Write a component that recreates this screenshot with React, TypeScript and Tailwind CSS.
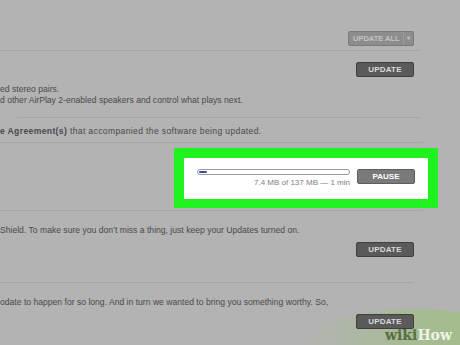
import React from 'react'

const font = { fontFamily: '"Liberation Sans", Arial, sans-serif' }

function UpdateButton({ className = '' }: { className?: string }) {
  return (
    <div
      className={`relative z-10 flex h-[15px] w-[58px] items-center justify-center rounded-[2px] border border-[#3f3f3f] bg-[#5a5a5a] text-[8px] font-bold tracking-[0.2px] text-[#dcdcdc] ${className}`}>
      UPDATE
    </div>
  )
}

export default function App() {
  return (
    <div
      className="relative h-[345px] w-[460px] overflow-hidden bg-[#b3b3b3] text-[8.6px] text-[#4a4a4a]"
      style={font}>
      {/* header row */}
      <div className="flex h-[51px] w-[421px] items-start justify-end border-b border-[#a6a6a6] pt-[31px] pr-[7px]">
        <div className="flex h-[15px] w-[66px] items-center whitespace-nowrap rounded-[2px] border border-[#7a7a7a] bg-[#8d8d8d] text-[7.5px] font-bold text-[#c4c4c4]">
          <span className="flex-1 pl-[4px]">UPDATE ALL</span>
          <span className="flex h-full w-[10px] items-center justify-center border-l border-[#9a9a9a] text-[6px]">
            ▾
          </span>
        </div>
      </div>

      {/* row 1 */}
      <div className="relative h-[67px]">
        <div className="flex justify-end pt-[11px] pr-[46px]">
          <UpdateButton />
        </div>
        <div className="mt-[7px] leading-[11px]">
          <div>ed stereo pairs.</div>
          <div>d other AirPlay 2-enabled speakers and control what plays next.</div>
        </div>
        <div className="absolute bottom-0 left-[17px] h-px w-[403px] bg-[#a6a6a6]" />
      </div>

      {/* row 2 */}
      <div className="h-[25px] w-[423px] border-b border-[#a6a6a6] pt-[8px] leading-[11px] tracking-[0.35px]">
        <span className="font-semibold">e Agreement(s)</span> that accompanied the software being
        updated.
      </div>

      {/* row 3 - downloading */}
      <div className="h-[68px] w-[423px] border-b border-[#a6a6a6] pt-[5px]">
        <div className="ml-[174px] w-[264px] bg-[#1ff21f] p-[10px] pb-[9px]">
          <div className="flex h-[41px] items-start bg-white pt-[11px] pl-[13px]">
            <div className="flex w-[153px] flex-col items-end">
              <div className="relative h-[6px] w-full overflow-hidden rounded-full border border-[#9a9a9a] bg-white">
                <div className="absolute top-[1px] left-[1px] h-[2px] w-[8px] rounded-full bg-[#3b4f9e]" />
              </div>
              <div className="mt-[3px] text-[8px] leading-[9px] text-[#808080]">
                7.4 MB of 137 MB — 1 min
              </div>
            </div>
            <div className="ml-[7px] flex h-[15px] w-[58px] items-center justify-center rounded-[2px] border border-[#5e5e5e] bg-[#7a7a7a] text-[8px] font-bold text-white">
              PAUSE
            </div>
          </div>
        </div>
      </div>

      {/* row 4 */}
      <div className="h-[72px] w-[414px] border-b border-[#a6a6a6] pt-[14px]">
        <div className="leading-[11px]">
          Shield. To make sure you don’t miss a thing, just keep your Updates turned on.
        </div>
        <div className="mt-[6px] flex justify-end">
          <UpdateButton />
        </div>
      </div>

      {/* row 5 */}
      <div className="pt-[14px]">
        <div className="leading-[11px]">
          odate to happen for so long. And in turn we wanted to bring you something worthy. So,
        </div>
        <div className="mt-[6px] flex justify-end pr-[46px]">
          <UpdateButton />
        </div>
      </div>

      {/* watermark */}
      <div className="absolute right-[-70px] bottom-[-40px] h-[76px] w-[230px] rounded-[50%] bg-gradient-to-r from-[#b3b3b3] via-[#a3bd8a] to-[#9cc07a] opacity-80" />
      <div
        className="absolute right-[8px] bottom-[2px] text-[14px] font-bold leading-[15px]"
        style={{ fontFamily: '"DejaVu Serif", "Liberation Serif", serif' }}>
        <span className="text-[#566e45]">wiki</span>
        <span className="text-[#eef3e8]">How</span>
      </div>
    </div>
  )
}
